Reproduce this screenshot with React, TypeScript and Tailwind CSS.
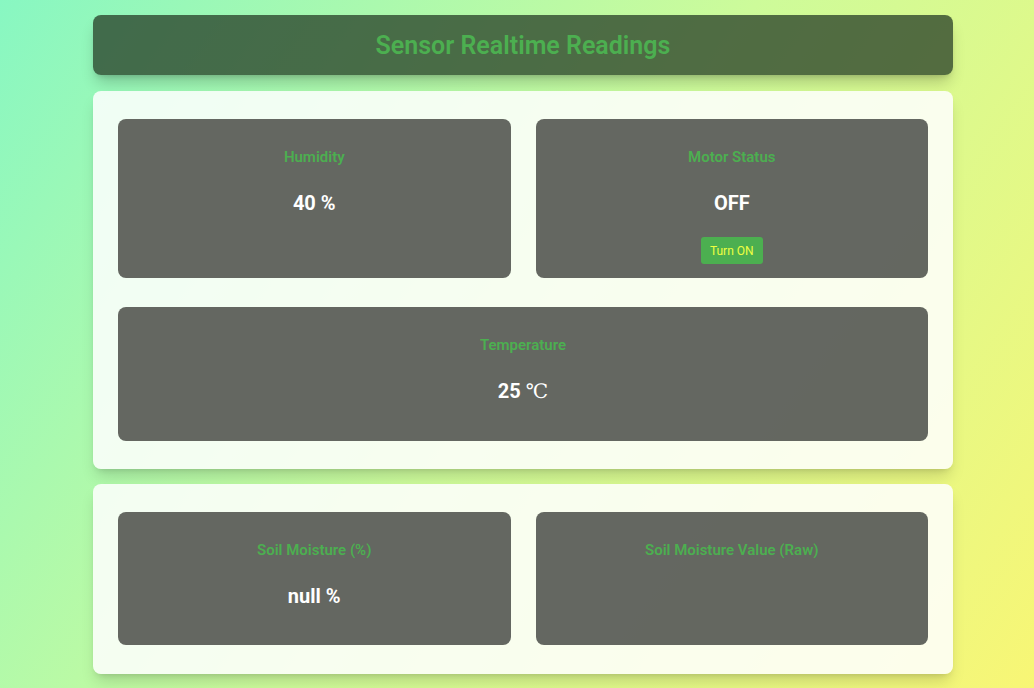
import React from "react";

type Reading = {
  label: string;
  value?: React.ReactNode;
};

const Card = ({
  label,
  value,
  height,
  children,
}: Reading & { height: string; children?: React.ReactNode }) => (
  <div
    className={`${height} flex flex-col items-center rounded-lg bg-[#5c5f59]/95 pt-[28px] text-center`}
  >
    <h3 className="text-[15px] leading-[20px] font-semibold text-[#4caf50]">
      {label}
    </h3>
    {value !== undefined && (
      <p className="mt-[24px] text-[20px] leading-[24px] font-bold text-white">
        {value}
      </p>
    )}
    {children}
  </div>
);

export default function App() {
  return (
    <div
      className="min-h-[688px] w-full bg-linear-[125deg] from-[#88f7c2] via-[#cdfb9a] to-[#f8f675] pt-[15px] pb-[14px]"
      style={{ fontFamily: "Roboto, 'Liberation Sans', sans-serif" }}
    >
      <div className="ml-[93px] w-[860px]">
        {/* Header */}
        <div className="flex h-[60px] items-center justify-center rounded-lg bg-[#263c26]/75 pt-[2px] shadow-lg shadow-black/20">
          <h1 className="text-[25px] font-semibold text-[#4caf50]">
            Sensor Realtime Readings
          </h1>
        </div>

        {/* Main readings */}
        <section className="mt-[16px] rounded-lg bg-white/85 px-[25px] pt-[28px] pb-[28px] shadow-lg shadow-black/15">
          <div className="grid grid-cols-2 gap-[25px]">
            <Card label="Humidity" value="40 %" height="h-[159px]" />
            <Card label="Motor Status" value="OFF" height="h-[159px]">
              <button className="mt-[22px] h-[27px] w-[62px] rounded-[3px] bg-[#4caf50] text-[12px] text-[#eeff41]">
                Turn ON
              </button>
            </Card>
          </div>
          <div className="mt-[29px]">
            <Card
              label="Temperature"
              height="h-[134px]"
              value={
                <>
                  25{" "}
                  <span
                    className="font-normal"
                    style={{ fontFamily: "'DejaVu Serif', 'Liberation Serif', serif" }}
                  >
                    ℃
                  </span>
                </>
              }
            />
          </div>
        </section>

        {/* Soil */}
        <section className="mt-[15px] rounded-lg bg-white/85 px-[25px] pt-[28px] pb-[29px] shadow-lg shadow-black/15">
          <div className="grid grid-cols-2 gap-[25px]">
            <Card label="Soil Moisture (%)" value="null %" height="h-[133px]" />
            <Card label="Soil Moisture Value (Raw)" height="h-[133px]" />
          </div>
        </section>
      </div>
    </div>
  );
}
